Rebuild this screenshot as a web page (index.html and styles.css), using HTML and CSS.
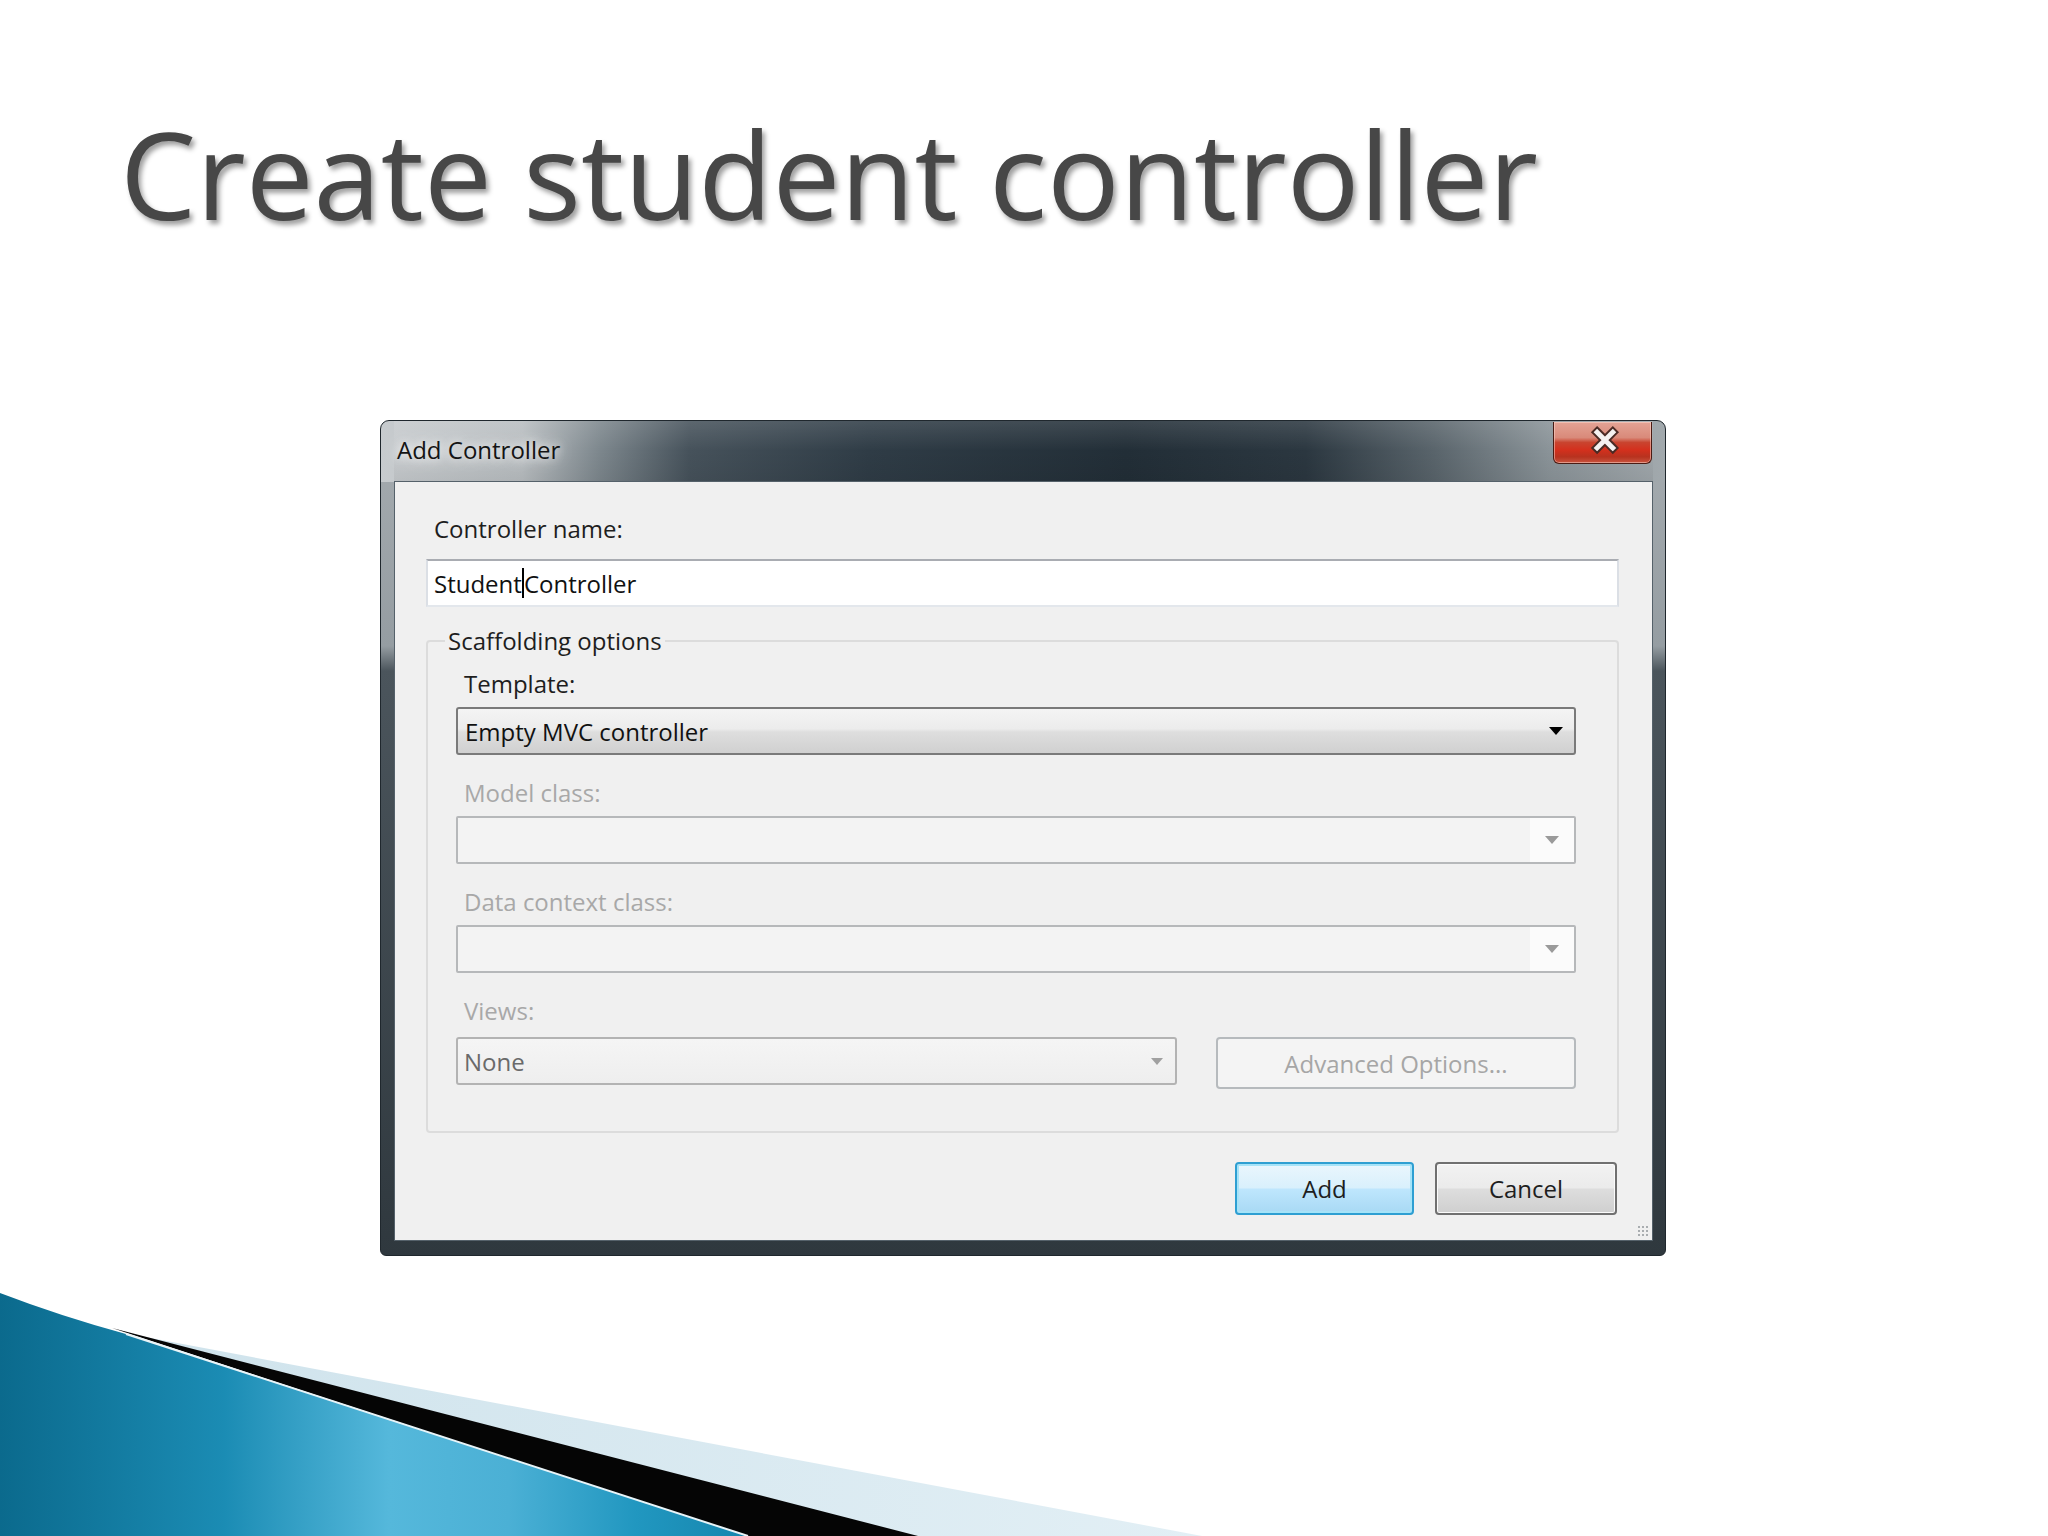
FILE: index.html
```html
<!DOCTYPE html>
<html lang="en">
<head>
    <meta charset="UTF-8">
    <title>Create student controller</title>
    <link rel="stylesheet" href="styles.css">
</head>
<body>
    <main class="slide">
        <h1 class="slide-title">Create student controller</h1>

        <div class="dialog">
            <div class="titlebar">
                <span class="titlebar-text">Add Controller</span>
                <button class="close-btn" aria-label="Close">
                    <svg width="99" height="42" viewBox="0 0 99 42">
                        <path d="M44 10 L60 26 M60 10 L44 26" stroke="#4a2a24" stroke-width="9" stroke-linecap="square" fill="none"/>
                        <path d="M44 10 L60 26 M60 10 L44 26" stroke="#f4f1f0" stroke-width="5" stroke-linecap="square" fill="none"/>
                    </svg>
                </button>
            </div>

            <div class="client">
                <label class="field-label first">Controller name:</label>
                <div class="textbox">Student<span class="caret"></span>Controller</div>

                <fieldset class="groupbox">
                    <legend>Scaffolding options</legend>
                    <div class="group-body">
                        <div class="field-label">Template:</div>
                        <div class="combo combo-active">
                            <span>Empty MVC controller</span>
                            <span class="arrow"></span>
                        </div>

                        <div class="field-label disabled">Model class:</div>
                        <div class="combo combo-disabled">
                            <span class="combo-text"></span>
                            <span class="combo-btn"><span class="arrow arrow-gray"></span></span>
                        </div>

                        <div class="field-label disabled">Data context class:</div>
                        <div class="combo combo-disabled">
                            <span class="combo-text"></span>
                            <span class="combo-btn"><span class="arrow arrow-gray"></span></span>
                        </div>

                        <div class="field-label disabled views-label">Views:</div>
                        <div class="views-row">
                            <div class="combo combo-views">
                                <span>None</span>
                                <span class="arrow arrow-small"></span>
                            </div>
                            <button class="btn btn-disabled">Advanced Options...</button>
                        </div>
                    </div>
                </fieldset>

                <div class="actions">
                    <button class="btn btn-default">Add</button>
                    <button class="btn btn-cancel">Cancel</button>
                </div>

                <div class="grip"></div>
            </div>
        </div>
    </main>

    <svg class="swoosh" width="2048" height="256" viewBox="0 1280 2048 256">
        <defs>
            <linearGradient id="blueFill" x1="0" y1="0" x2="1" y2="0">
                <stop offset="0" stop-color="#0b6a8d"/>
                <stop offset="0.3" stop-color="#1b8cb4"/>
                <stop offset="0.52" stop-color="#55b8db"/>
                <stop offset="0.68" stop-color="#4bb0d5"/>
                <stop offset="0.85" stop-color="#2197c0"/>
                <stop offset="1" stop-color="#1586ae"/>
            </linearGradient>
            <linearGradient id="paleFill" x1="0" y1="0" x2="1" y2="0">
                <stop offset="0" stop-color="#cfe3ec"/>
                <stop offset="1" stop-color="#e2eff5"/>
            </linearGradient>
        </defs>
        <path d="M140 1336 L1202 1536 L900 1536 Z" fill="url(#paleFill)"/>
        <path d="M112 1328 L918 1536 L745 1536 Z" fill="#050505"/>
        <path d="M0 1293 Q60 1316 126 1334 L748 1536 L0 1536 Z" fill="url(#blueFill)"/>
        <path d="M126 1334 L748 1536" stroke="#e8f4f8" stroke-width="2" fill="none"/>
    </svg>
</body>
</html>
```

FILE: styles.css
```css
/* Base */
* {
    margin: 0;
    padding: 0;
    box-sizing: border-box;
}

body {
    width: 2048px;
    height: 1536px;
    position: relative;
    overflow: hidden;
    background: #ffffff;
    font-family: 'Open Sans', 'Noto Sans', sans-serif;
}

button {
    font: inherit;
    cursor: default;
}

/* Slide */
.slide {
    position: relative;
    z-index: 1;
    padding: 112px 0 0 120px;
}

.slide-title {
    font-size: 121px;
    line-height: 122px;
    font-weight: 400;
    color: #474747;
    text-shadow: 3px 4px 5px rgba(0, 0, 0, 0.38);
}

/* Dialog window */
.dialog {
    width: 1286px;
    margin: 186px 0 0 260px;
    padding: 0 12px 14px 13px;
    border: 1px solid #1f272d;
    border-radius: 9px 9px 6px 6px;
    background:
        linear-gradient(to right, #c7cbce 0%, #b8bdc0 11%, #7d878d 17%, #46525b 24%, #2f3c46 38%, #222e37 58%, #2b3740 72%, #59646b 82%, #8a9398 91%, #a2a9ad 100%) top / 100% 61px no-repeat,
        linear-gradient(to bottom, #a6acb0 0, #959da2 225px, #4b555c 250px, #2f383e 100%);
}

.titlebar {
    height: 60px;
    display: flex;
    justify-content: space-between;
    align-items: flex-start;
    background: linear-gradient(to bottom, rgba(255, 255, 255, 0.12), rgba(255, 255, 255, 0) 50%, rgba(0, 0, 0, 0.06));
}

.titlebar-text {
    margin: 14px 0 0 3px;
    font-size: 24px;
    line-height: 30px;
    color: #141414;
    text-shadow: 0 0 10px #ffffff, 0 0 18px rgba(255, 255, 255, 0.9);
}

.close-btn {
    width: 99px;
    height: 42px;
    margin: 1px 1px 0 0;
    display: flex;
    border: 1px solid #4a1c14;
    border-top: none;
    border-radius: 0 0 6px 6px;
    background: linear-gradient(to bottom, #e3a395 0%, #d98a7a 38%, #c9442f 50%, #d4301d 68%, #b7321f 85%, #c9553f 100%);
    box-shadow: inset 0 0 0 1px rgba(255, 220, 210, 0.5);
}

/* Client area */
.client {
    position: relative;
    height: 760px;
    padding: 32px 33px 25px 31px;
    border: 1px solid #55616a;
    background: #f0f0f0;
}

.field-label {
    display: block;
    padding-left: 8px;
    margin-bottom: 8px;
    font-size: 24px;
    line-height: 30px;
    color: #1e1e1e;
}

.field-label.first {
    margin-bottom: 15px;
}

.field-label.disabled {
    color: #a8a8a8;
}

.field-label.views-label {
    margin-bottom: 11px;
}

.textbox {
    height: 48px;
    display: flex;
    align-items: center;
    padding: 0 6px;
    border: 2px solid;
    border-color: #a9acb2 #dbdfe5 #e3e7ec #dbdfe5;
    background: #ffffff;
    font-size: 24px;
    color: #111111;
}

.caret {
    width: 2px;
    height: 30px;
    background: #000000;
}

/* Group box */
.groupbox {
    margin-top: 19px;
    min-width: 0;
    padding: 13px 41px 42px 17px;
    border: 2px solid #dcdcdc;
    border-radius: 4px;
}

.groupbox legend {
    padding: 0 3px;
    font-size: 24px;
    line-height: 30px;
    color: #1e1e1e;
}

.group-body {
    padding-left: 11px;
}

.combo {
    height: 48px;
    display: flex;
    align-items: center;
    justify-content: space-between;
    font-size: 24px;
    border-radius: 3px;
}

.combo + .field-label {
    margin-top: 23px;
}

.combo-active {
    padding: 0 11px 0 7px;
    border: 2px solid #7a7a7a;
    background: linear-gradient(to bottom, #f4f4f4 0%, #ececec 45%, #dedede 52%, #d0d0d0 100%);
    color: #111111;
}

.combo-disabled {
    border: 2px solid #b6b8ba;
    border-radius: 2px;
    background: #f3f3f3;
}

.combo-text {
    flex: 1;
}

.combo-btn {
    width: 44px;
    height: 100%;
    display: flex;
    align-items: center;
    justify-content: center;
    background: #fbfbfb;
}

.arrow {
    width: 0;
    height: 0;
    border-left: 7px solid transparent;
    border-right: 7px solid transparent;
    border-top: 8px solid #000000;
}

.arrow-gray {
    border-top-color: #9a9a9a;
}

.arrow-small {
    border-left-width: 6px;
    border-right-width: 6px;
    border-top: 7px solid #a0a0a0;
}

.views-row {
    display: flex;
    justify-content: space-between;
    align-items: flex-start;
}

.combo-views {
    width: 721px;
    padding: 0 12px 0 6px;
    border: 2px solid #b3b3b3;
    background: linear-gradient(to bottom, #f5f5f5, #eeeeee);
    color: #6a6a6a;
}

/* Buttons */
.btn {
    height: 52px;
    border-radius: 4px;
    font-size: 24px;
    color: #1e1e1e;
}

.btn-disabled {
    width: 360px;
    border: 2px solid #b6babd;
    background: #f4f4f4;
    color: #a6a6a6;
}

.actions {
    display: flex;
    justify-content: flex-end;
    gap: 21px;
    margin: 29px 2px 0 0;
}

.actions .btn {
    height: 53px;
}

.btn-default {
    width: 179px;
    border: 2px solid #2e9fd2;
    background: linear-gradient(to bottom, #eaf6fd 0%, #d9f0fc 48%, #bee6fd 52%, #a8d9f4 100%);
    box-shadow: inset 0 0 0 2px #a6e3f8;
}

.btn-cancel {
    width: 182px;
    border: 2px solid #707070;
    background: linear-gradient(to bottom, #f2f2f2 0%, #ebebeb 48%, #dddddd 52%, #cfcfcf 100%);
    box-shadow: inset 0 0 0 1px #fbfbfb;
}

.grip {
    position: absolute;
    right: 3px;
    bottom: 3px;
    width: 12px;
    height: 12px;
    background: radial-gradient(circle, #a9adb0 1px, transparent 1.5px) 0 0 / 4px 4px;
}

/* Slide decoration */
.swoosh {
    position: absolute;
    left: 0;
    bottom: 0;
}
```
